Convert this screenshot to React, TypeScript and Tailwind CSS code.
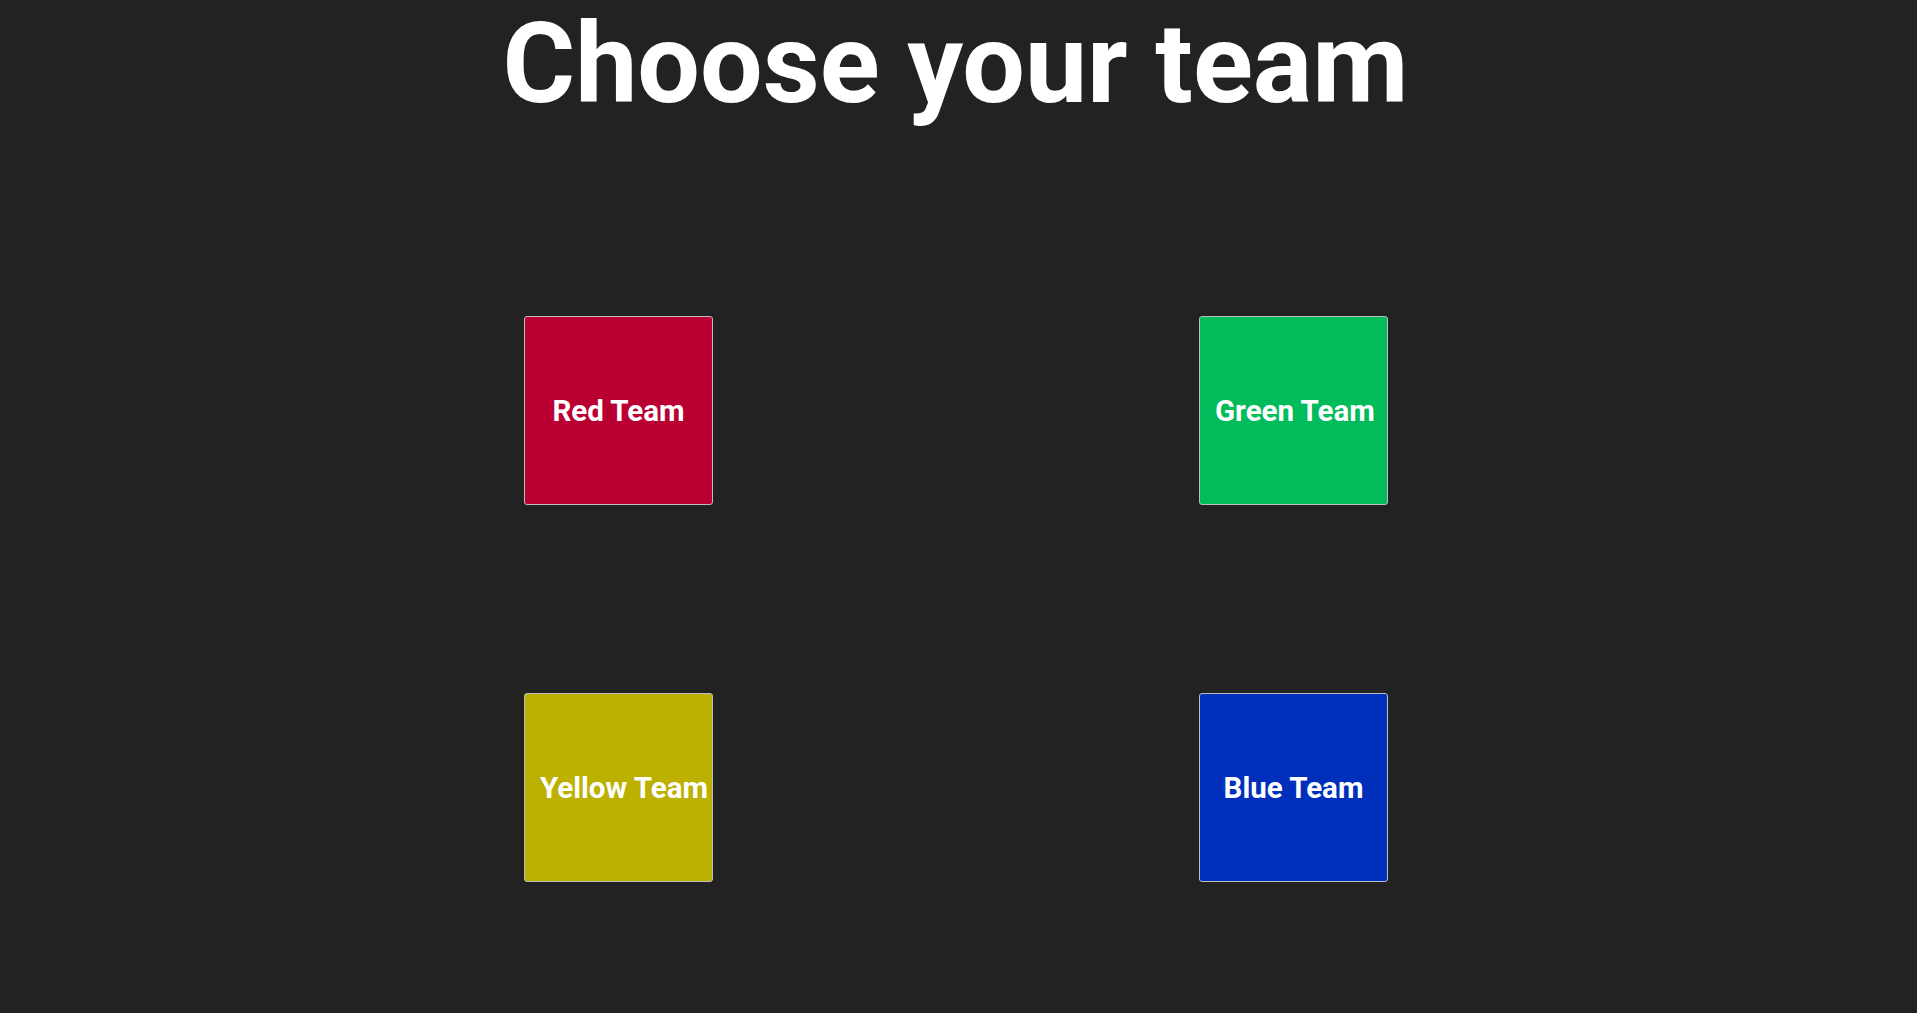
import React from "react";

const teams = [
  { name: "Red Team", color: "bg-[#ba0033]" },
  { name: "Green Team", color: "bg-[#02bb5a]" },
  { name: "Yellow Team", color: "bg-[#bcb000]" },
  { name: "Blue Team", color: "bg-[#0030bb]" },
];

const TeamBox: React.FC<{ name: string; color: string }> = ({ name, color }) => (
  <button
    className={`${color} w-[189px] h-[189px] border border-[#bdbdbd] rounded-[3px] px-[15px] pt-[2px] flex items-center text-left text-white text-[29.5px] font-bold leading-none whitespace-nowrap`}
    style={{ fontFamily: "Roboto, sans-serif" }}
  >
    <span className="mx-auto">{name}</span>
  </button>
);

export default function App() {
  return (
    <div
      className="min-h-screen bg-[#222222] text-white"
      style={{ fontFamily: "Roboto, sans-serif" }}
    >
      <h1 className="text-center text-[111px] font-bold leading-[normal] -mt-[1px] pr-[6px]">
        Choose your team
      </h1>
      <div className="mt-[187px] grid grid-cols-[189px_189px] gap-x-[486px] gap-y-[188px] justify-center pr-[5px]">
        {teams.map((t) => (
          <TeamBox key={t.name} name={t.name} color={t.color} />
        ))}
      </div>
    </div>
  );
}
